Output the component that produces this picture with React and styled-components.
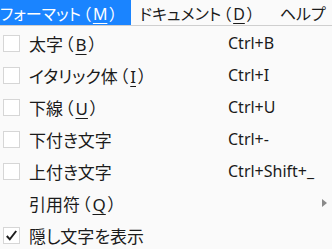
import React from "react";
import styled, { createGlobalStyle } from "styled-components";

const GlobalStyle = createGlobalStyle`
  body {
    margin: 0;
    background: #fafafa;
    font-family: "Noto Sans", "Noto Sans CJK JP", sans-serif;
    font-feature-settings: "palt";
    color: #1b1b1b;
    overflow: hidden;
  }
`;

const menus = [
  { label: "フォーマット", key: "M", active: true },
  { label: "ドキュメント", key: "D" },
  { label: "ヘルプ" },
];

const items = [
  { label: "太字", key: "B", shortcut: "Ctrl+B", box: true },
  { label: "イタリック体", key: "I", shortcut: "Ctrl+I", box: true },
  { label: "下線", key: "U", shortcut: "Ctrl+U", box: true },
  { label: "下付き文字", shortcut: "Ctrl+-", box: true },
  { label: "上付き文字", shortcut: "Ctrl+Shift+_", box: true },
  { label: "引用符", key: "Q", submenu: true },
  { label: "隠し文字を表示", box: true, checked: true },
];

const Label = ({ label, mnemonic }) => (
  <>
    {label}
    {mnemonic && (
      <Mnemonic>
        <Paren $side="left">（</Paren>
        <u>{mnemonic}</u>
        <Paren $side="right">）</Paren>
      </Mnemonic>
    )}
  </>
);

const App = () => {
  return (
    <React.Fragment>
      <GlobalStyle />
      <MenuBar>
        {menus.map((m) => (
          <MenuTitle key={m.label} $active={m.active}>
            <Label label={m.label} mnemonic={m.key} />
          </MenuTitle>
        ))}
      </MenuBar>
      <Dropdown>
        {items.map((it) => (
          <Row key={it.label}>
            <Check>
              {it.box && (
                <Box>
                  {it.checked && (
                    <svg width="13" height="13" viewBox="0 0 13 13">
                      <path
                        d="M1.8 7 L4.8 10.3 L11.2 2"
                        fill="none"
                        stroke="#1e1e1e"
                        strokeWidth="2"
                      />
                    </svg>
                  )}
                </Box>
              )}
            </Check>
            <ItemText>
              <Label label={it.label} mnemonic={it.key} />
            </ItemText>
            <Shortcut>
              {it.shortcut}
              {it.submenu && <Arrow />}
            </Shortcut>
          </Row>
        ))}
      </Dropdown>
    </React.Fragment>
  );
};

const Mnemonic = styled.span`
  u {
    text-decoration-thickness: 1px;
    text-underline-offset: 3px;
  }
`;

const Paren = styled.span`
  margin: ${(p) => (p.$side === "left" ? "0 2px 0 2px" : "0 0 0 2px")};
`;

const MenuBar = styled.div`
  display: flex;
  height: 25px;
  overflow: hidden;
  background: #fafafa;
  border-bottom: 1px solid #cfcfcf;
  font-size: 16px;
`;

const MenuTitle = styled.div`
  display: flex;
  align-items: center;
  flex-shrink: 0;
  height: 25px;
  white-space: nowrap;
  padding: ${(p) => (p.$active ? "0 14px 0 0" : "0 17px 0 8px")};
  background: ${(p) => (p.$active ? "#1a84ff" : "transparent")};
  color: ${(p) => (p.$active ? "#fff" : "#1b1b1b")};

  &:last-child {
    padding-right: 0;
  }
`;

const Dropdown = styled.div`
  padding-top: 1px;
`;

const Row = styled.div`
  display: grid;
  grid-template-columns: 29px 199px 1fr;
  align-items: center;
  height: 32px;
  font-size: 17px;
`;

const Check = styled.div`
  display: flex;
  align-items: center;
  padding-left: 3px;
`;

const Box = styled.div`
  display: flex;
  align-items: center;
  justify-content: center;
  width: 15px;
  height: 15px;
  border: 1px solid #d6d6d6;
  background: #fff;
`;

const ItemText = styled.div`
  white-space: nowrap;
`;

const Shortcut = styled.div`
  display: flex;
  align-items: center;
  justify-content: space-between;
  white-space: nowrap;
  padding-right: 5px;
  font-size: 16px;
`;

const Arrow = styled.span`
  margin-left: auto;
  width: 0;
  height: 0;
  border-top: 4px solid transparent;
  border-bottom: 4px solid transparent;
  border-left: 5px solid #8a8a8a;
`;

export default App;
